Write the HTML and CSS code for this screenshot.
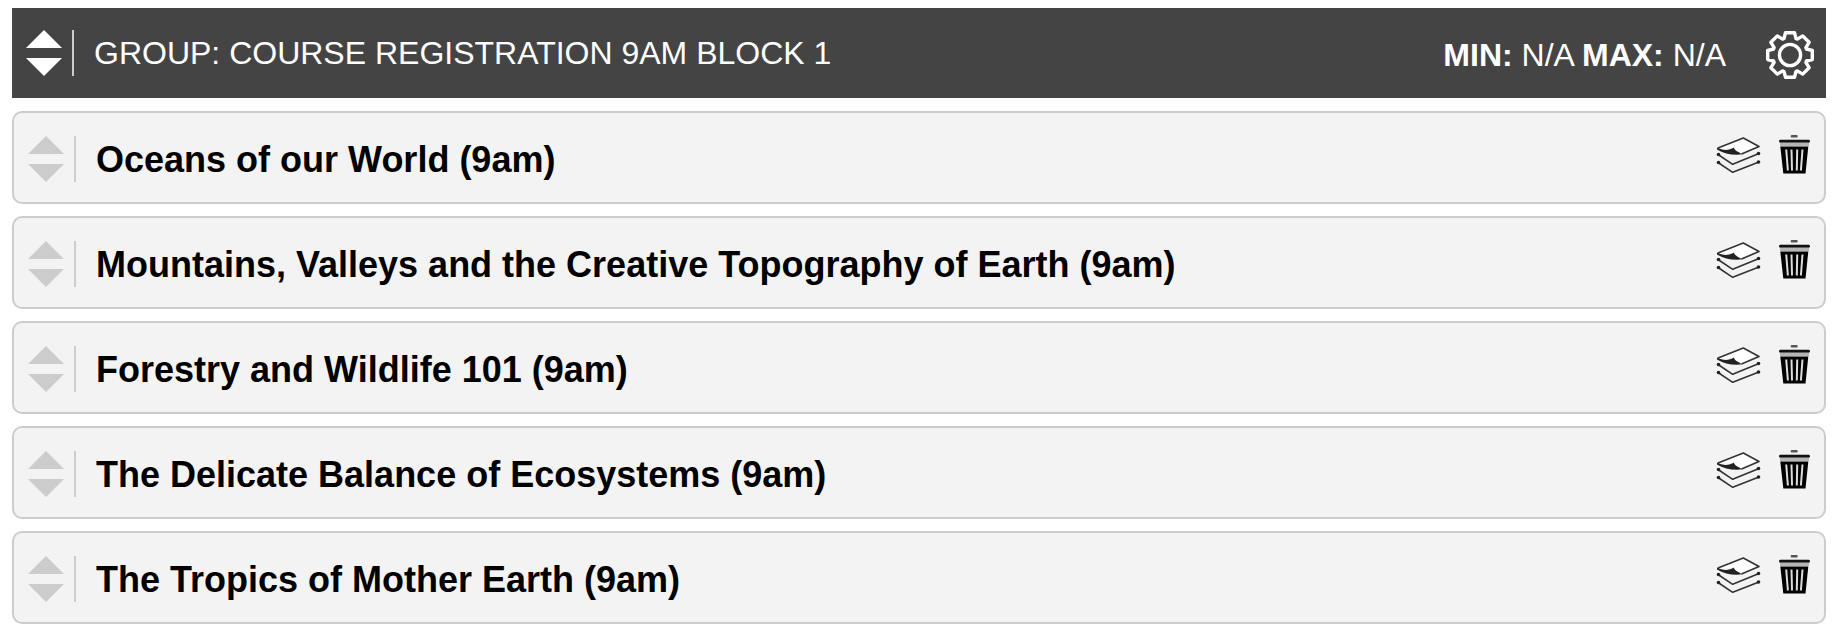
FILE: index.html
```html
<!DOCTYPE html>
<html lang="en">
<head>
  <meta charset="UTF-8">
  <title>Course Registration</title>
  <meta name="viewport" content="width=device-width, initial-scale=1.0">
  <link rel="stylesheet" href="styles.css">
</head>
<body>

<!-- Shared icons -->
<svg class="icon-defs" aria-hidden="true">
  <symbol id="icon-sort" viewBox="0 0 36 46">
    <path fill="currentColor" d="M18 0L36 18H0zM0 28H36L18 46z"/>
  </symbol>
  <symbol id="icon-gear" viewBox="-24 -24 48 48">
    <g fill="none" stroke="currentColor" stroke-width="3.4" stroke-linejoin="round">
      <path d="M-6-16.5L-4.5-22.3H4.5L6-16.5L7.4-15.9L12.7-19.1L19.1-12.7L15.9-7.4L16.5-6L22.3-4.5V4.5L16.5 6L15.9 7.4L19.1 12.7L12.7 19.1L7.4 15.9L6 16.5L4.5 22.3H-4.5L-6 16.5L-7.4 15.9L-12.7 19.1L-19.1 12.7L-15.9 7.4L-16.5 6L-22.3 4.5V-4.5L-16.5-6L-15.9-7.4L-19.1-12.7L-12.7-19.1L-7.4-15.9z"/>
      <circle r="10.6"/>
    </g>
  </symbol>
  <symbol id="icon-layers" viewBox="0 0 45 38">
    <path fill="#fff" d="M27.3 2L43 10.5L25.5 18L16 12L2 12.3z"/>
    <g fill="none" stroke="#333" stroke-width="1.6" stroke-linejoin="round">
      <path d="M2 12L27.3 2L43 10.5L25.5 18"/>
      <path d="M2 18.5L16.7 28.3L43 17.5"/>
      <path d="M2 26.5L16.7 36.3L43 26"/>
    </g>
    <path fill="#222" d="M1 11.5C6 14.5 13 15 18 11.5C18 14 22 16 26.5 18.3C18 19.5 8 18 1 13.5z"/>
    <g fill="#222">
      <circle cx="2.5" cy="18.5" r="1.8"/>
      <circle cx="2.5" cy="26.5" r="1.8"/>
      <circle cx="42.5" cy="17.5" r="1.8"/>
      <circle cx="42.5" cy="26" r="1.8"/>
    </g>
  </symbol>
  <symbol id="icon-trash" viewBox="0 0 33 41">
    <rect x="12.7" y="1" width="7" height="2.5" rx="1" fill="#555"/>
    <rect x="2" y="5" width="29" height="7" fill="#b5b5b5"/>
    <rect x="1" y="6" width="31" height="2.5" rx="1" fill="#111"/>
    <path fill="#000" d="M2.3 12.5H30.3L27.5 39.5H5.3z"/>
    <path stroke="#ddd" stroke-width="2" fill="none" d="M8.2 15.5L9.9 36.5M13.5 15.5L14 36.5M19.2 15.5L18.8 36.5M24.5 15.5L22.9 36.5"/>
  </symbol>
</svg>

<div class="group">
  <div class="group-header">
    <span class="handle"><svg><use href="#icon-sort"/></svg></span>
    <h1 class="group-title">GROUP: COURSE REGISTRATION 9AM BLOCK 1</h1>
    <p class="limits"><strong>MIN:</strong> N/A <strong>MAX:</strong> N/A</p>
    <button class="icon-button gear" type="button" aria-label="Group settings"><svg><use href="#icon-gear"/></svg></button>
  </div>

  <ul class="courses">
    <li class="course">
      <span class="handle"><svg><use href="#icon-sort"/></svg></span>
      <h2 class="course-title">Oceans of our World (9am)</h2>
      <div class="actions">
        <button class="icon-button layers" type="button" aria-label="Copy"><svg><use href="#icon-layers"/></svg></button>
        <button class="icon-button trash" type="button" aria-label="Delete"><svg><use href="#icon-trash"/></svg></button>
      </div>
    </li>
    <li class="course">
      <span class="handle"><svg><use href="#icon-sort"/></svg></span>
      <h2 class="course-title">Mountains, Valleys and the Creative Topography of Earth (9am)</h2>
      <div class="actions">
        <button class="icon-button layers" type="button" aria-label="Copy"><svg><use href="#icon-layers"/></svg></button>
        <button class="icon-button trash" type="button" aria-label="Delete"><svg><use href="#icon-trash"/></svg></button>
      </div>
    </li>
    <li class="course">
      <span class="handle"><svg><use href="#icon-sort"/></svg></span>
      <h2 class="course-title">Forestry and Wildlife 101 (9am)</h2>
      <div class="actions">
        <button class="icon-button layers" type="button" aria-label="Copy"><svg><use href="#icon-layers"/></svg></button>
        <button class="icon-button trash" type="button" aria-label="Delete"><svg><use href="#icon-trash"/></svg></button>
      </div>
    </li>
    <li class="course">
      <span class="handle"><svg><use href="#icon-sort"/></svg></span>
      <h2 class="course-title">The Delicate Balance of Ecosystems (9am)</h2>
      <div class="actions">
        <button class="icon-button layers" type="button" aria-label="Copy"><svg><use href="#icon-layers"/></svg></button>
        <button class="icon-button trash" type="button" aria-label="Delete"><svg><use href="#icon-trash"/></svg></button>
      </div>
    </li>
    <li class="course">
      <span class="handle"><svg><use href="#icon-sort"/></svg></span>
      <h2 class="course-title">The Tropics of Mother Earth (9am)</h2>
      <div class="actions">
        <button class="icon-button layers" type="button" aria-label="Copy"><svg><use href="#icon-layers"/></svg></button>
        <button class="icon-button trash" type="button" aria-label="Delete"><svg><use href="#icon-trash"/></svg></button>
      </div>
    </li>
  </ul>
</div>

</body>
</html>
```
FILE: styles.css
```css
* {
  box-sizing: border-box;
}

body {
  margin: 0;
  background-color: #fff;
  font-family: Helvetica, "Liberation Sans", Arial, sans-serif;
}

h1, h2, p, ul {
  margin: 0;
  padding: 0;
}

.icon-defs {
  display: none;
}

.group {
  padding: 8px 8px 8px 12px;
}

.group-header {
  display: flex;
  align-items: center;
  padding: 19px 12px 19px 14px;
  margin-bottom: 13px;
  background-color: #444;
  color: #fff;
  font-size: 32px;
  line-height: 46px;
}

.group-title {
  flex: 1;
  font-size: 32px;
  font-weight: normal;
}

.limits {
  padding-top: 4px;
  margin-right: 40px;
}

/* Drag handle with its divider */
.handle {
  padding-right: 10px;
  margin-right: 20px;
  border-right: 2px solid #ccc;
  cursor: move;
}

.handle svg {
  display: block;
  width: 36px;
  height: 46px;
}

.courses {
  display: flex;
  flex-direction: column;
  gap: 12px;
  list-style: none;
}

.course {
  display: flex;
  align-items: flex-end;
  padding: 21px 13px 20px 14px;
  border: 2px solid #ccc;
  border-radius: 10px;
  background-color: #f3f3f3;
}

.course .handle {
  color: #ccc;
}

.course-title {
  flex: 1;
  font-size: 36px;
  line-height: 44px;
  color: #000;
}

.actions {
  display: flex;
  align-items: center;
  gap: 17px;
  padding-bottom: 7px;
}

.icon-button {
  padding: 0;
  border: none;
  background: none;
  color: inherit;
  cursor: pointer;
}

.icon-button svg {
  display: block;
  width: 100%;
  height: 100%;
}

.gear {
  width: 48px;
  height: 48px;
  margin-top: 4px;
}

.layers {
  width: 45px;
  height: 38px;
}

.trash {
  width: 33px;
  height: 41px;
}
```
